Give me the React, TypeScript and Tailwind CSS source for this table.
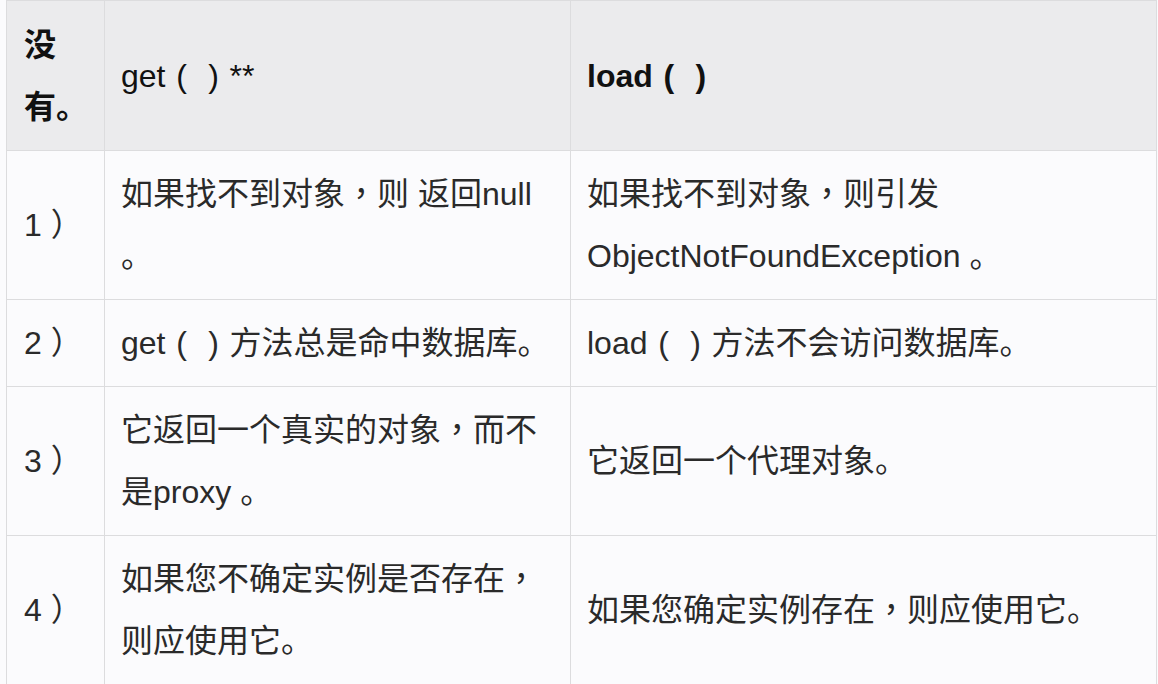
const rows: [string, string, string][] = [
  ['1 ）', '如果找不到对象，则 返回null 。', '如果找不到对象，则引发ObjectNotFoundException 。'],
  ['2 ）', 'get()方法总是命中数据库。', 'load()方法不会访问数据库。'],
  ['3 ）', '它返回一个真实的对象，而不是proxy 。', '它返回一个代理对象。'],
  ['4 ）', '如果您不确定实例是否存在，则应使用它。', '如果您确定实例存在，则应使用它。'],
];

// parens sit centred in a full-width cell, commas centred like the source font
function fmt(text: string) {
  return text.split(/([()，])/).map((part, i) => {
    if (part === '(' || part === ')') {
      return (
        <span key={i} className="inline-block w-[32px] text-center">
          {part}
        </span>
      );
    }
    if (part === '，') {
      return (
        <span key={i} className="leading-none" style={{ fontFamily: '"Noto Sans CJK TC", sans-serif' }}>
          {part}
        </span>
      );
    }
    return part;
  });
}

export default function App() {
  return (
    <div
      className="min-h-screen bg-[#fbfbfd] pl-[6px] text-[32px] leading-[62px] text-[#2a2a2a]"
      style={{ fontFamily: '"Liberation Sans", "Noto Sans CJK SC", sans-serif' }}
    >
      <table className="w-[1150px] table-fixed border-collapse">
        <colgroup>
          <col className="w-[98px]" />
          <col className="w-[466px]" />
          <col className="w-[586px]" />
        </colgroup>
        <thead>
          <tr className="h-[150px] bg-[#ebebed]">
            <th className="border border-[#dcdcde] pl-[17px] pr-4 py-3 text-left align-middle font-bold text-[#111]">
              没有。
            </th>
            <th className="border border-[#dcdcde] px-4 py-3 text-left align-middle font-normal text-[#111]">
              {fmt('get()**')}
            </th>
            <th className="border border-[#dcdcde] px-4 py-3 text-left align-middle font-bold text-[#111]">
              {fmt('load()')}
            </th>
          </tr>
        </thead>
        <tbody>
          {rows.map(([num, get, load]) => (
            <tr key={num}>
              <td className="border border-[#dcdcde] pl-[17px] pr-4 py-3 align-middle">{num}</td>
              <td className="border border-[#dcdcde] px-4 py-3 align-middle">{fmt(get)}</td>
              <td className="border border-[#dcdcde] px-4 py-3 align-middle">{fmt(load)}</td>
            </tr>
          ))}
        </tbody>
      </table>
    </div>
  );
}
